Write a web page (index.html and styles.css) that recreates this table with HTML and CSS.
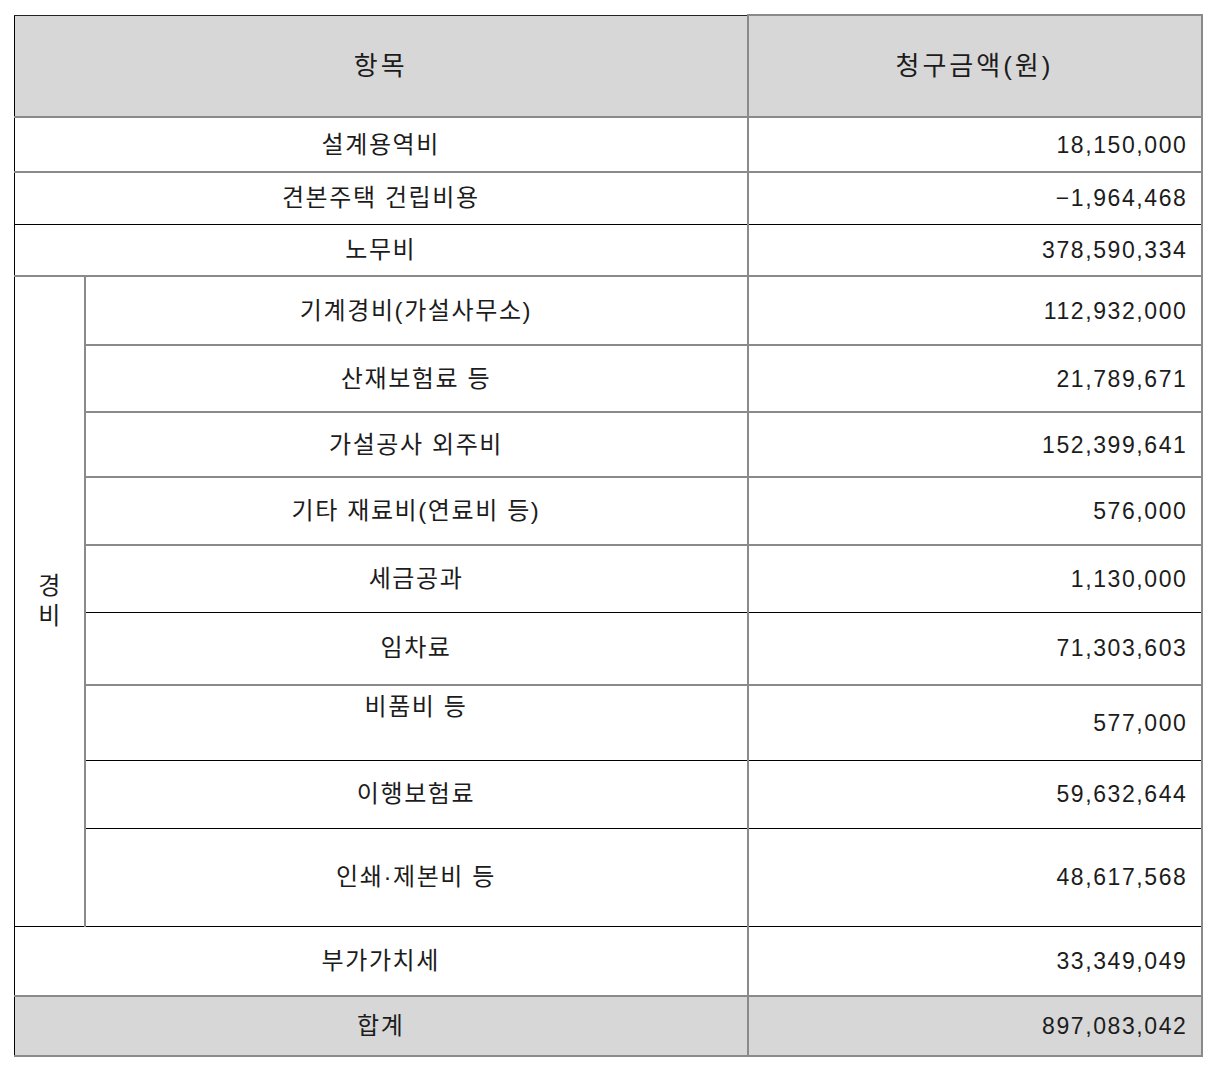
FILE: index.html
```html
<!DOCTYPE html>
<html lang="ko">
<head>
<meta charset="utf-8">
<title>청구금액</title>
<link rel="stylesheet" href="styles.css">
</head>
<body>
<table class="claim">
  <colgroup>
    <col class="c-group">
    <col class="c-item">
    <col class="c-amount">
  </colgroup>
  <thead>
    <tr class="h-head">
      <th colspan="2">항목</th>
      <th class="th-amount">청구금액(원)</th>
    </tr>
  </thead>
  <tbody>
    <tr class="h55 bb-gray">
      <td colspan="2" class="item">설계용역비</td>
      <td class="amount">18,150,000</td>
    </tr>
    <tr class="h52 bb-black">
      <td colspan="2" class="item">견본주택 건립비용</td>
      <td class="amount">−1,964,468</td>
    </tr>
    <tr class="h52 bb-gray">
      <td colspan="2" class="item">노무비</td>
      <td class="amount">378,590,334</td>
    </tr>
    <tr class="h69 bb-gray">
      <td rowspan="9" class="group">경<br>비</td>
      <td class="item sub">기계경비(가설사무소)</td>
      <td class="amount">112,932,000</td>
    </tr>
    <tr class="h67 bb-gray">
      <td class="item sub">산재보험료 등</td>
      <td class="amount">21,789,671</td>
    </tr>
    <tr class="h65 bb-gray">
      <td class="item sub">가설공사 외주비</td>
      <td class="amount">152,399,641</td>
    </tr>
    <tr class="h68 bb-gray">
      <td class="item sub">기타 재료비(연료비 등)</td>
      <td class="amount">576,000</td>
    </tr>
    <tr class="h67 bb-black">
      <td class="item sub">세금공과</td>
      <td class="amount">1,130,000</td>
    </tr>
    <tr class="h73 bb-gray">
      <td class="item sub">임차료</td>
      <td class="amount">71,303,603</td>
    </tr>
    <tr class="h75 bb-black">
      <td class="item sub top">비품비 등</td>
      <td class="amount">577,000</td>
    </tr>
    <tr class="h68 bb-black">
      <td class="item sub">이행보험료</td>
      <td class="amount">59,632,644</td>
    </tr>
    <tr class="h98 bb-black">
      <td class="item sub">인쇄·제본비 등</td>
      <td class="amount">48,617,568</td>
    </tr>
    <tr class="h70 bb-gray">
      <td colspan="2" class="item">부가가치세</td>
      <td class="amount">33,349,049</td>
    </tr>
  </tbody>
  <tfoot>
    <tr class="h60 total">
      <td colspan="2" class="item">합계</td>
      <td class="amount">897,083,042</td>
    </tr>
  </tfoot>
</table>
</body>
</html>
```

FILE: styles.css
```css
html, body {
  margin: 0;
  padding: 0;
  background: #ffffff;
}

body {
  padding: 14px 0 0 14px;
  font-family: "Liberation Sans", "Noto Sans CJK KR", sans-serif;
  color: #1c1c1c;
}

.claim {
  border-collapse: collapse;
  table-layout: fixed;
  width: 1187px;
  font-size: 23px;
  line-height: 30px;
  letter-spacing: 1.6px;
}

.c-group { width: 70px; }
.c-item { width: 663px; }
.c-amount { width: 454px; }

.claim th,
.claim td {
  padding: 0;
  border: 2px solid #8a8a8a;
  vertical-align: middle;
  font-weight: normal;
}

.claim tr > :first-child { border-left: 1px solid #000; }

.h-head {
  height: 102px;
  background: #d7d7d7;
}

.h-head th {
  font-size: 26px;
  letter-spacing: 3px;
  text-align: center;
}

.h-head th:first-child { border-top: 1px solid #222; }

.item {
  text-align: center;
  font-size: 24px;
  letter-spacing: 1.6px;
}

.amount {
  text-align: right;
  padding-right: 13px !important;
}

.group {
  text-align: center;
  font-size: 24px;
  letter-spacing: 0;
  border-bottom: 1px solid #000 !important;
}

.top {
  vertical-align: top !important;
  padding-top: 6px !important;
}

.bb-black td { border-bottom: 1px solid #000; }
.bb-black + tr td { border-top: 1px solid #000; }

.total {
  background: #d7d7d7;
}

.h55 { height: 55px; }
.h52 { height: 52px; }
.h60 { height: 60px; }
.h65 { height: 65px; }
.h67 { height: 67px; }
.h68 { height: 68px; }
.h69 { height: 69px; }
.h70 { height: 70px; }
.h73 { height: 73px; }
.h75 { height: 75px; }
.h98 { height: 98px; }
```
